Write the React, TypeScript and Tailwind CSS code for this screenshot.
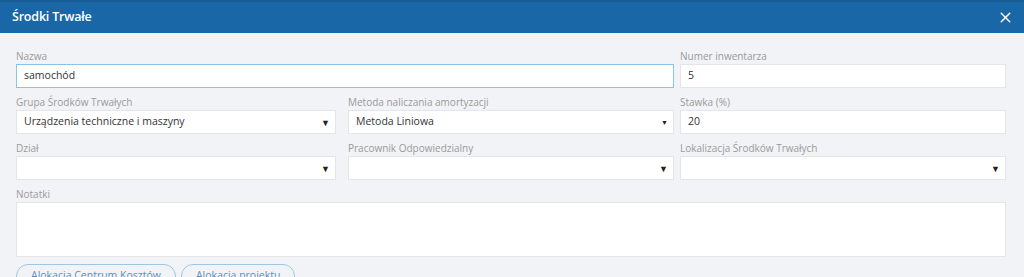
import { X } from "lucide-react";

function Label({ children }: { children: React.ReactNode }) {
  return <div className="h-[16px] text-[10px] leading-[16px] text-[#9a9a9a]">{children}</div>;
}

function TextBox({ value, focused }: { value?: string; focused?: boolean }) {
  return (
    <div
      className={`flex h-[24px] items-center border bg-white px-[7px] text-[10.5px] text-[#333] ${
        focused ? "border-[#8cc4e6]" : "border-[#e3e5e8]"
      }`}
    >
      {value}
    </div>
  );
}

function Select({ value, arrow = "text-[9px]" }: { value?: string; arrow?: string }) {
  return (
    <div className="flex h-[24px] items-center justify-between border border-[#e3e5e8] bg-white pl-[7px] pr-[5px] text-[10.5px] text-[#333]">
      <span>{value}</span>
      <span className={`${arrow} leading-none text-[#222]`}>▼</span>
    </div>
  );
}

function Field({ label, children, className = "" }: { label: string; children: React.ReactNode; className?: string }) {
  return (
    <div className={`flex flex-col ${className}`}>
      <Label>{label}</Label>
      {children}
    </div>
  );
}

export default function App() {
  return (
    <div className="h-[277px] w-[1024px] overflow-hidden bg-[#f2f3f6]" style={{ fontFamily: '"Open Sans", "Noto Sans", sans-serif' }}>
      <header className="flex h-[33px] items-center justify-between border-t-[2px] border-[#195d96] bg-[#1a67a8] pl-[12px] pr-[10px]">
        <h1 className="text-[12.5px] font-semibold tracking-[-0.2px] text-white">Środki Trwałe</h1>
        <X className="h-[17px] w-[17px] text-white" strokeWidth={2} />
      </header>

      <div className="pl-[16px] pr-[18px] pt-[15px]">
        <div className="grid grid-cols-[326px_326px_326px] gap-x-[6px] gap-y-[6px]">
          <Field label="Nazwa" className="col-span-2">
            <TextBox value="samochód" focused />
          </Field>
          <Field label="Numer inwentarza">
            <TextBox value="5" />
          </Field>

          <Field label="Grupa Środków Trwałych" className="pr-[6px]">
            <Select value="Urządzenia techniczne i maszyny" />
          </Field>
          <Field label="Metoda naliczania amortyzacji">
            <Select value="Metoda Liniowa" arrow="text-[7px]" />
          </Field>
          <Field label="Stawka (%)">
            <TextBox value="20" />
          </Field>

          <Field label="Dział" className="pr-[6px]">
            <Select />
          </Field>
          <Field label="Pracownik Odpowiedzialny">
            <Select />
          </Field>
          <Field label="Lokalizacja Środków Trwałych">
            <Select />
          </Field>

          <Field label="Notatki" className="col-span-3">
            <div className="h-[55px] border border-[#e3e5e8] bg-white" />
          </Field>
        </div>

        <div className="mt-[7px] flex gap-[5px]">
          <button className="h-[24px] rounded-full border border-[#9cc8e4] px-[14px] text-[10.5px] text-[#5a8fbf]">
            Alokacja Centrum Kosztów
          </button>
          <button className="h-[24px] rounded-full border border-[#9cc8e4] px-[14px] text-[10.5px] text-[#5a8fbf]">
            Alokacja projektu
          </button>
        </div>
      </div>
    </div>
  );
}
